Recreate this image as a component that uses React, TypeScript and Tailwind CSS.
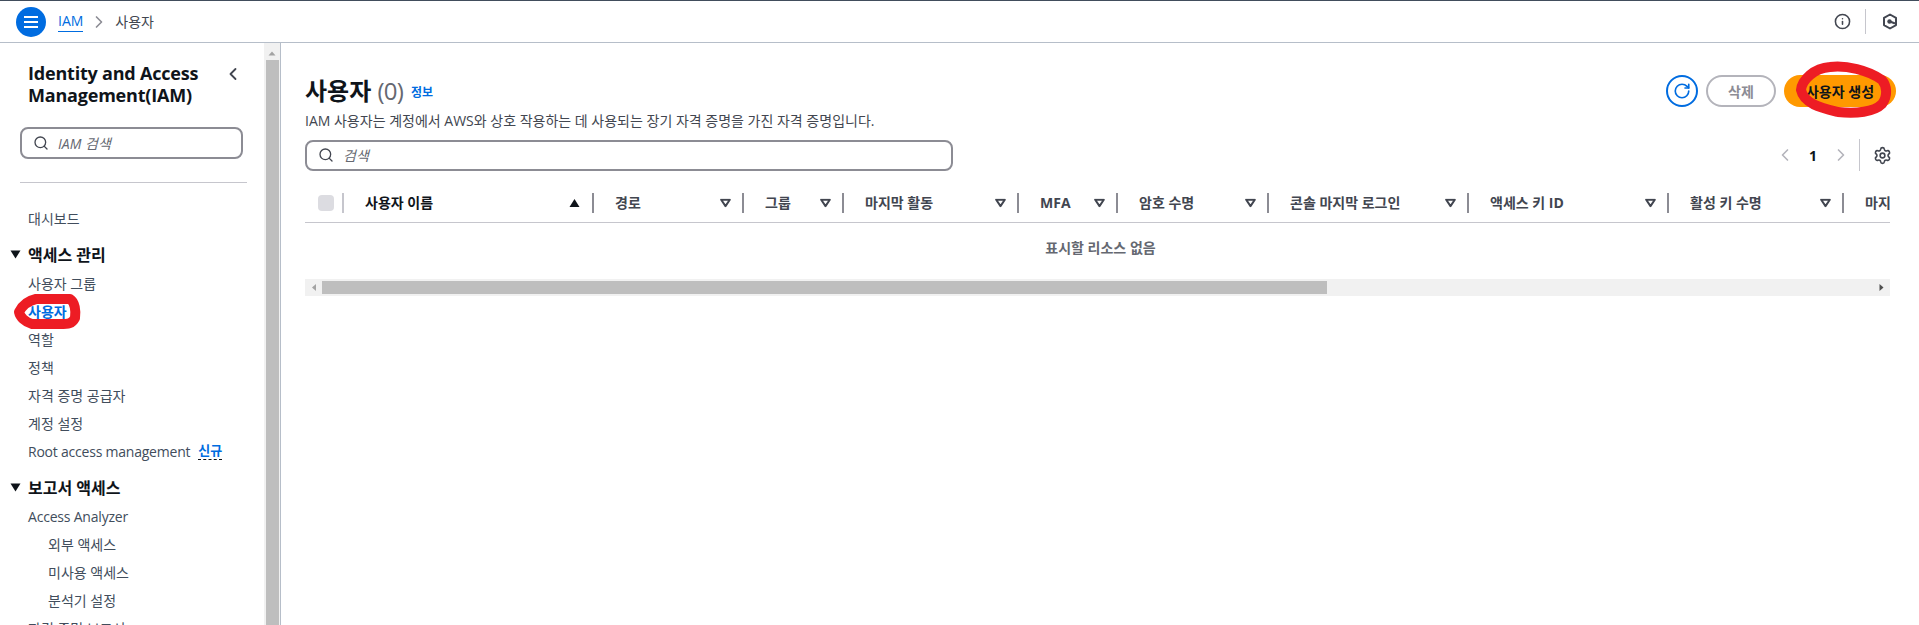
import { ChevronLeft, ChevronRight, Info, RotateCw, Search, Settings } from "lucide-react";

const font = "font-['Open_Sans','Noto_Sans_CJK_KR',sans-serif]";

const columns = [
  { label: "경로", width: "w-[150px]" },
  { label: "그룹", width: "w-[100px]" },
  { label: "마지막 활동", width: "w-[175px]" },
  { label: "MFA", width: "w-[99px]" },
  { label: "암호 수명", width: "w-[151px]" },
  { label: "콘솔 마지막 로그인", width: "w-[200px]" },
  { label: "액세스 키 ID", width: "w-[200px]" },
  { label: "활성 키 수명", width: "w-[175px]" },
  { label: "마지막 사용", width: "w-[175px]" },
];

function NavItem({ children, sub }: { children: React.ReactNode; sub?: boolean }) {
  return (
    <div className={`flex h-[28px] items-center text-[14px] text-[#414d5c] ${sub ? "pl-[48px]" : "pl-[28px]"}`}>
      {children}
    </div>
  );
}

function NavSection({ children }: { children: React.ReactNode }) {
  return (
    <div className="flex h-[29px] items-center gap-[7px] pl-[10px] text-[16px] font-bold text-[#0f141a]">
      <svg width="11" height="9" viewBox="0 0 11 9">
        <path d="M0.5 0.5h10L5.5 8.5z" fill="#0f141a" />
      </svg>
      {children}
    </div>
  );
}

function Sidebar() {
  return (
    <aside className="relative flex h-full w-[281px] shrink-0 border-r border-[#b6bec9]">
      <div className="w-[264px] shrink-0 overflow-hidden">
        <div className="relative flex w-[264px] pl-[28px] pt-[19px] text-[18px] font-bold leading-[22px] tracking-[-0.2px] text-[#0f141a]">
          <div>
            Identity and Access
            <br />
            Management(IAM)
          </div>
          <ChevronLeft size={20} strokeWidth={2.2} className="absolute left-[223px] top-[21px] text-[#424650]" />
        </div>
        <div className="ml-[20px] mt-[21px] flex h-[32px] w-[223px] items-center rounded-[8px] border-2 border-[#8c8c94] pl-[11px]">
          <Search size={16} strokeWidth={2} className="text-[#424650]" />
          <span className="ml-[9px] text-[14px] italic text-[#656871]">IAM 검색</span>
        </div>
        <div className="ml-[20px] mt-[23px] h-px w-[227px] bg-[#c6c6cd]" />
        <div className="mt-[21px]">
          <NavItem>대시보드</NavItem>
        </div>
        <div className="mt-[8px]">
          <NavSection>액세스 관리</NavSection>
          <NavItem>사용자 그룹</NavItem>
          <div className="flex h-[28px] items-center pl-[28px] text-[14px] font-bold text-[#006ce0]">사용자</div>
          <NavItem>역할</NavItem>
          <NavItem>정책</NavItem>
          <NavItem>자격 증명 공급자</NavItem>
          <NavItem>계정 설정</NavItem>
          <NavItem>
            <span className="tracking-[-0.22px]">Root access management</span>
            <span className="ml-[8px] border-b border-dashed border-[#0f141a] text-[13px] font-bold leading-[17px] text-[#006ce0]">
              신규
            </span>
          </NavItem>
        </div>
        <div className="mt-[8px]">
          <NavSection>보고서 액세스</NavSection>
          <NavItem>
            <span className="tracking-[-0.2px]">Access Analyzer</span>
          </NavItem>
          <NavItem sub>외부 액세스</NavItem>
          <NavItem sub>미사용 액세스</NavItem>
          <NavItem sub>분석기 설정</NavItem>
          <NavItem>자격 증명 보고서</NavItem>
        </div>
      </div>
      <div className="flex w-[16px] shrink-0 flex-col items-center bg-[#f1f1f1]">
        <svg width="10" height="17" viewBox="0 0 10 17" className="shrink-0">
          <path d="M1.5 12.5L5 8.5l3.5 4z" fill="#a3a3a3" />
        </svg>
        <div className="h-full w-[13px] bg-[#bebebe]" />
      </div>
      {/* 스크린샷 위에 그려진 빨간 표시 */}
      <svg className="absolute left-[10px] top-[246px]" width="76" height="46" viewBox="0 0 76 46" fill="none">
        <path
          d="M9 23C12 17 17 12 26 10L60 10C65 13 66 22 65 29C62 35 58 35 50 35L22 35C15 33 10 28 9 23Z"
          stroke="#ed1c24"
          strokeWidth="10"
          strokeLinejoin="round"
        />
      </svg>
    </aside>
  );
}

function SortIcon() {
  return (
    <svg width="11" height="9" viewBox="0 0 11 9" className="absolute right-[13px] top-1/2 -translate-y-1/2">
      <path d="M1.2 1.2h8.6L5.5 7.6z" fill="none" stroke="#424650" strokeWidth="2" strokeLinejoin="round" />
    </svg>
  );
}

function Table() {
  return (
    <div className="w-[1585px] overflow-hidden">
      <div className="flex h-[40px] w-[1900px] items-center border-b border-[#c6c6cd] text-[14px] font-bold text-[#424650]">
        <div className="relative flex h-full w-[39px] shrink-0 items-center pl-[13px]">
          <div className="h-[16px] w-[16px] rounded-[4px] bg-[#dcdce1]" />
          <div className="absolute right-0 top-[10px] h-[20px] w-[2px] bg-[#c6c6cd]" />
        </div>
        <div className="relative flex h-full w-[250px] shrink-0 items-center pl-[21px] text-[#0f141a]">
          사용자 이름
          <svg width="11" height="8" viewBox="0 0 10 8" className="absolute right-[14px] top-1/2 -translate-y-1/2">
            <path d="M0 8L5 0l5 8z" fill="#0f141a" />
          </svg>
          <div className="absolute right-0 top-[10px] h-[20px] w-[2px] bg-[#8c8c94]" />
        </div>
        {columns.map((c) => (
          <div key={c.label} className={`relative flex h-full shrink-0 items-center whitespace-nowrap pl-[21px] ${c.width}`}>
            {c.label}
            <SortIcon />
            <div className="absolute right-0 top-[10px] h-[20px] w-[2px] bg-[#8c8c94]" />
          </div>
        ))}
      </div>
      <div className="flex h-[56px] items-center justify-center pb-[7px] pl-[6px] text-[14px] font-bold text-[#656871]">
        표시할 리소스 없음
      </div>
      <div className="flex h-[17px] items-center bg-[#f1f1f1]">
        <svg width="17" height="17" viewBox="0 0 17 17" className="shrink-0">
          <path d="M11 5v7L7 8.5z" fill="#a3a3a3" />
        </svg>
        <div className="h-[13px] w-[1005px] bg-[#bebebe]" />
        <svg width="17" height="17" viewBox="0 0 17 17" className="ml-auto shrink-0">
          <path d="M6.5 5v7l4-3.5z" fill="#505050" />
        </svg>
      </div>
    </div>
  );
}

export default function App() {
  return (
    <div className={`relative flex h-[625px] w-[1919px] flex-col overflow-hidden bg-white ${font}`}>
      <header className="flex h-[43px] shrink-0 items-center border-b border-t border-b-[#b6bec9] border-t-[#414d5c] pl-[16px] pr-[21px]">
        <div className="flex h-[30px] w-[30px] flex-col items-center justify-center gap-[3px] rounded-full bg-[#006ce0]">
          <span className="h-[2px] w-[14px] bg-white" />
          <span className="h-[2px] w-[14px] bg-white" />
          <span className="h-[2px] w-[14px] bg-white" />
        </div>
        <span className="ml-[12px] border-b border-[#006ce0] text-[14px] leading-[20px] text-[#006ce0]">IAM</span>
        <ChevronRight size={20} strokeWidth={2} className="ml-[6px] text-[#8c8c94]" />
        <span className="ml-[6px] text-[14px] text-[#424650]">사용자</span>
        <Info size={17} strokeWidth={2.2} className="ml-auto text-[#424650]" />
        <div className="ml-[14px] h-[25px] w-px bg-[#c6c6cd]" />
        <svg width="16" height="17" viewBox="0 0 16 17" fill="none" className="ml-[16px]">
          <path d="M8 1.5l6 3.4v7.2l-6 3.4-6-3.4V4.9z" stroke="#424650" strokeWidth="2" strokeLinejoin="round" />
          <circle cx="7.5" cy="8.5" r="2.2" fill="#424650" />
          <path d="M8 8.5l5 2" stroke="#424650" strokeWidth="2" />
        </svg>
      </header>
      <div className="flex min-h-0 flex-1">
        <Sidebar />
        <main className="min-w-0 flex-1 pl-[24px]">
          <div className="flex h-[64px] items-end justify-between pr-[23px]">
            <div className="flex h-[32px] items-center pb-[1px]">
              <h1 className="text-[24px] font-bold leading-[30px] text-[#0f141a]">
                사용자 <span className="font-normal tracking-[-0.8px] text-[#656871]">(0)</span>
              </h1>
              <span className="ml-[8px] mt-[4px] text-[12px] font-bold text-[#006ce0]">정보</span>
            </div>
            <div className="flex h-[32px] items-center">
              <div className="flex h-[32px] w-[32px] items-center justify-center rounded-full border-2 border-[#006ce0]">
                <RotateCw size={18} strokeWidth={2.2} className="text-[#006ce0]" />
              </div>
              <div className="ml-[8px] flex h-[32px] w-[70px] items-center justify-center rounded-full border-2 border-[#b4b4bb] text-[14px] font-bold text-[#8c8c94]">
                삭제
              </div>
              <div className="ml-[8px] flex h-[32px] w-[112px] items-center justify-center rounded-full bg-[#ff9900] text-[14px] font-bold text-[#0f141a]">
                사용자 생성
              </div>
            </div>
          </div>
          <p className="mt-[4px] text-[14px] leading-[20px] text-[#424650]">
            IAM 사용자는 계정에서 AWS와 상호 작용하는 데 사용되는 장기 자격 증명을 가진 자격 증명입니다.
          </p>
          <div className="mt-[8px] flex items-center justify-between pr-[27px]">
            <div className="flex h-[31px] w-[648px] items-center rounded-[8px] border-2 border-[#8c8c94] pl-[11px]">
              <Search size={16} strokeWidth={2} className="text-[#424650]" />
              <span className="ml-[9px] text-[14px] italic text-[#656871]">검색</span>
            </div>
            <div className="flex h-[32px] items-center text-[#b4b4bb]">
              <ChevronLeft size={20} strokeWidth={2} />
              <span className="ml-[14px] w-[8px] text-center text-[14px] font-bold text-[#0f141a]">1</span>
              <ChevronRight size={20} strokeWidth={2} className="ml-[14px]" />
              <div className="ml-[8px] h-[32px] w-px bg-[#c6c6cd]" />
              <Settings size={19} strokeWidth={2} className="ml-[13px] text-[#424650]" />
            </div>
          </div>
          <div className="mt-[12px]">
            <Table />
          </div>
        </main>
      </div>
      {/* 스크린샷 위에 그려진 빨간 표시 */}
      <svg className="absolute left-[1790px] top-[58px]" width="108" height="66" viewBox="0 0 108 66" fill="none">
        <path
          d="M11 32C12 22 24 10 40 9C56 7 78 12 92 22C97 28 98 38 92 46C84 54 66 56 48 54C32 50 14 46 11 32Z"
          stroke="#ed1c24"
          strokeWidth="10"
          strokeLinejoin="round"
        />
      </svg>
    </div>
  );
}
